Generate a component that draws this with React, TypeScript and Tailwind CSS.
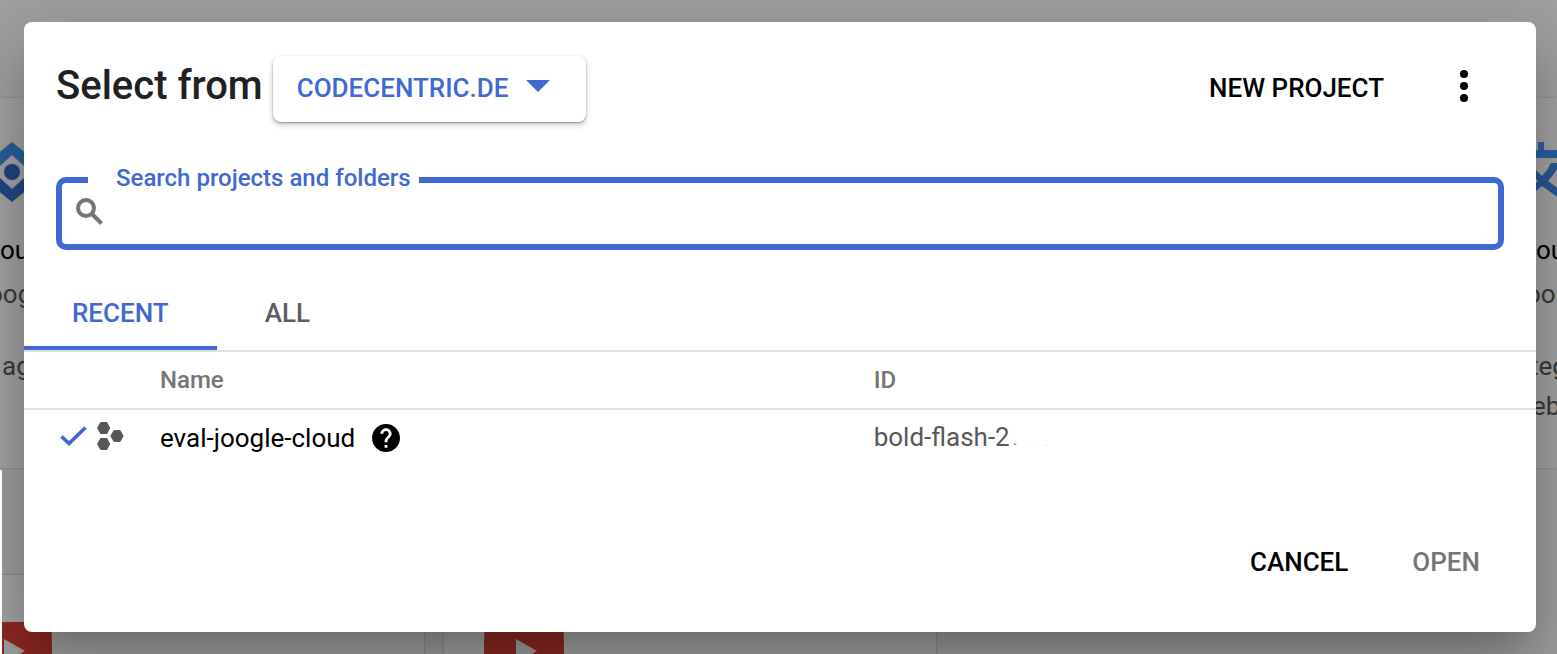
import React, { useState } from "react";

const textButton =
  "flex h-[66px] cursor-pointer items-center pb-0.5 text-[26px] leading-8 font-medium";

function ProductMark() {
  return (
    <svg className="block h-[60px] w-6" viewBox="0 0 24 60" aria-hidden="true">
      <path d="M12 0 38 21V37L12 13-14 37V21Z" fill="#29619f" />
      <path d="M12 60 38 39V23L12 47-14 23V39Z" fill="#214b86" />
      <circle cx="12" cy="30" r="8" fill="#1f4783" />
    </svg>
  );
}

function LanguageMark() {
  return (
    <svg className="block h-[60px] w-6 overflow-visible" viewBox="0 0 24 60" aria-hidden="true">
      <path d="M2-3H8V8H24V16H0V8H2Z" fill="#2b62a6" />
      <path d="M15 21H24Q19 32 12 39L24 48V57L6 44 0 49V41L2 39 0 37V28L6 34Q12 28 15 21Z" fill="#285a98" />
    </svg>
  );
}

function VideoMark({ className }: { className: string }) {
  return (
    <svg className={className} viewBox="0 0 80 60" aria-hidden="true">
      <path d="M1 0H79Q80 12 80 30V60H0V30Q0 12 1 0Z" fill="#902a22" />
      <path d="M32 17 53 29 32 41Z" fill="#a3a3a3" />
    </svg>
  );
}

function Backdrop() {
  return (
    <div
      aria-hidden="true"
      className="absolute inset-0 flex flex-col overflow-hidden bg-[#a1a1a1] pt-[98px] text-[26px] text-[#3b3b3b]"
    >
      <div className="flex h-[370px] shrink-0 justify-between bg-[#a6a6a6] pt-11 shadow-[0_0_2px_rgba(0,0,0,0.2)]">
        <div className="w-6 overflow-hidden whitespace-nowrap">
          <ProductMark />
          <p className="mt-7 h-10 leading-10 text-black">ou</p>
          <p className="-ml-3 h-12 leading-12">oog</p>
          <p className="mt-7 h-10 pl-0.5 leading-10">ag</p>
        </div>
        <div className="w-[21px] overflow-hidden whitespace-nowrap">
          <LanguageMark />
          <p className="mt-7 h-10 leading-10 text-black">ou</p>
          <p className="-ml-2.5 h-12 leading-12">oog</p>
          <p className="-ml-1.5 mt-7 h-10 leading-10">teg</p>
          <p className="-ml-1 h-10 leading-10">eb</p>
        </div>
      </div>
      <div className="mt-[107px] flex grow gap-5 pl-0.5">
        <div className="w-[422px] overflow-hidden bg-[#a6a6a6] pt-[47px] shadow-[0_0_2px_rgba(0,0,0,0.3)]">
          <VideoMark className="-ml-[30px] h-[60px] w-20" />
        </div>
        <div className="w-[492px] overflow-hidden bg-[#a6a6a6] pt-[47px] shadow-[0_0_2px_rgba(0,0,0,0.3)]">
          <VideoMark className="ml-10 h-[60px] w-20" />
        </div>
      </div>
    </div>
  );
}

function Tab({
  label,
  active,
  onSelect,
}: {
  label: string;
  active: boolean;
  onSelect: () => void;
}) {
  return (
    <button
      type="button"
      role="tab"
      aria-selected={active}
      onClick={onSelect}
      className={`h-[72px] cursor-pointer border-b-4 px-12 pt-0.5 text-[26px] leading-8 font-medium ${
        active ? "border-[#3f68d2] text-[#3f68d2]" : "border-transparent text-[#5c5c5c]"
      }`}
    >
      {label}
    </button>
  );
}

export default function App() {
  const [tab, setTab] = useState("recent");
  const [query, setQuery] = useState("");

  return (
    <div className="relative min-h-screen overflow-hidden pt-[22px] pr-[21px] pb-[22px] pl-6 font-['Roboto',sans-serif]">
      <Backdrop />
      <section
        role="dialog"
        aria-labelledby="dialog-title"
        className="relative rounded-lg bg-white pb-9 shadow-[0_22px_30px_-14px_rgba(0,0,0,0.2),0_48px_76px_6px_rgba(0,0,0,0.14),0_18px_92px_16px_rgba(0,0,0,0.12)]"
      >
        <header className="flex items-center px-8 pt-[34px]">
          <h1 id="dialog-title" className="pb-1.5 text-[40px] leading-12 font-medium text-[#212121]">
            Select from
          </h1>
          <button
            type="button"
            className={`${textButton} ml-2.5 rounded-lg bg-white px-6 text-[#3f68d2] shadow-[0_1px_2px_rgba(0,0,0,0.35),0_3px_6px_rgba(0,0,0,0.2)]`}
          >
            CODECENTRIC.DE
            <svg className="mr-3 mb-1 ml-[18px] h-3 w-6" viewBox="0 0 24 12" aria-hidden="true">
              <path d="M0 0H24L12 12Z" fill="currentColor" />
            </svg>
          </button>
          <button type="button" className={`${textButton} ml-auto text-black`}>
            NEW PROJECT
          </button>
          <button
            type="button"
            aria-label="More options"
            className="mr-5 ml-15 flex h-12 w-10 cursor-pointer items-center justify-center"
          >
            <svg className="mb-1.5 h-8 w-2" viewBox="0 0 8 32" aria-hidden="true">
              <circle cx="4" cy="4" r="4" />
              <circle cx="4" cy="16" r="4" />
              <circle cx="4" cy="28" r="4" />
            </svg>
          </button>
        </header>

        <fieldset className="mx-8 mt-[42px] rounded-[10px] border-6 border-[#3f68d2] pl-[26px]">
          <legend className="pr-2 pb-1 pl-7 text-2xl leading-7 font-medium text-[#3f68d2]">
            <label htmlFor="project-search">Search projects and folders</label>
          </legend>
          <div className="-ml-[26px] flex h-12 items-center pb-4 pl-3.5">
            <svg className="size-7" viewBox="0 0 28 28" fill="none" stroke="#757575" strokeWidth="4" aria-hidden="true">
              <circle cx="10" cy="10" r="8" />
              <path d="M15.5 15.5 25.5 25.5" />
            </svg>
            <input
              id="project-search"
              type="text"
              value={query}
              onChange={(event) => setQuery(event.target.value)}
              className="ml-3 h-8 grow bg-transparent text-[26px] text-black outline-none"
            />
          </div>
        </fieldset>

        <div role="tablist" className="mt-7 flex border-b-2 border-[#e0e0e0]">
          <Tab label="RECENT" active={tab === "recent"} onSelect={() => setTab("recent")} />
          <Tab label="ALL" active={tab === "all"} onSelect={() => setTab("all")} />
        </div>

        <table className="w-full table-fixed text-left">
          <thead>
            <tr className="h-[57px] border-b-2 border-[#e0e0e0] text-2xl text-[#757575]">
              <td className="w-[136px]" />
              <th scope="col" className="w-[47.2%] font-medium">
                Name
              </th>
              <th scope="col" className="font-medium">
                ID
              </th>
            </tr>
          </thead>
          <tbody>
            <tr className="h-14 text-[26px] leading-8">
              <td className="pl-9">
                <div className="flex items-center gap-2.5 pb-1">
                  <svg className="h-5 w-[27px]" viewBox="0 0 27 20" aria-hidden="true">
                    <path d="M1.5 10.5 9 17.5 25.5 1.5" fill="none" stroke="#3f68d2" strokeWidth="3.6" />
                  </svg>
                  <svg className="h-7 w-[27px]" viewBox="0 0 27 28" fill="#575757" aria-hidden="true">
                    <path d="M3.5 0H10L13.3 6 10 12H3.5L0 6Z" />
                    <path d="M3.5 16H10L13.3 22 10 28H3.5L0 22Z" />
                    <path d="M16.8 8H23.3L26.6 14 23.3 20H16.8L13.3 14Z" />
                  </svg>
                </div>
              </td>
              <td>
                <div className="flex items-center gap-[17px] text-black">
                  <span>eval-joogle-cloud</span>
                  <svg className="size-7" viewBox="2 2 20 20" role="img" aria-label="Help">
                    <path d="M12 2C6.48 2 2 6.48 2 12s4.48 10 10 10 10-4.48 10-10S17.52 2 12 2zm1 17h-2v-2h2v2zm2.07-7.75l-.9.92C13.45 12.9 13 13.5 13 15h-2v-.5c0-1.1.45-2.1 1.17-2.83l1.24-1.26c.37-.36.59-.86.59-1.41 0-1.1-.9-2-2-2s-2 .9-2 2H8c0-2.21 1.79-4 4-4s4 1.79 4 4c0 .88-.36 1.68-.93 2.25z" />
                  </svg>
                </div>
              </td>
              <td>
                <div className="flex items-center pb-0.5 text-[#575757]">
                  <span>bold-flash-2</span>
                  <svg className="h-5 w-10" viewBox="0 0 40 20" aria-hidden="true">
                    <path d="M4 16 7 18H4Z" fill="#888" />
                    <path d="M21 18H24V19H21ZM35 18H38V19H35Z" fill="#eee" />
                  </svg>
                </div>
              </td>
            </tr>
          </tbody>
        </table>

        <footer className="mt-[65px] flex justify-end gap-16 pr-14">
          <button type="button" className={`${textButton} text-black`}>
            CANCEL
          </button>
          <button type="button" disabled className={`${textButton} text-[#757575]`}>
            OPEN
          </button>
        </footer>
      </section>
      <div aria-hidden="true" className="absolute top-[470px] bottom-0 left-0 w-0.5 bg-white" />
    </div>
  );
}
